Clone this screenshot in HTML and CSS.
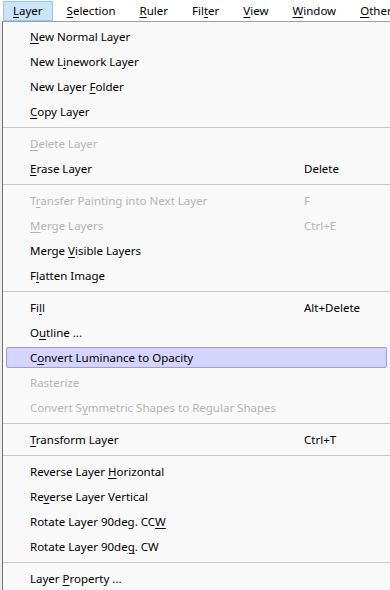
FILE: index.html
```html
<!DOCTYPE html>
<html lang="en">
<head>
<meta charset="UTF-8">
<title>Layer menu</title>
<link rel="stylesheet" href="styles.css">
</head>
<body>

<!-- MENU BAR -->
<div class="menubar">
    <span class="top active"><u>L</u>ayer</span>
    <span class="top"><u>S</u>election</span>
    <span class="top"><u>R</u>uler</span>
    <span class="top">Fil<u>t</u>er</span>
    <span class="top"><u>V</u>iew</span>
    <span class="top"><u>W</u>indow</span>
    <span class="top"><u>O</u>ther</span>
</div>

<div class="app">
    <!-- DROPDOWN -->
    <div class="menu">
        <div class="item"><span><u>N</u>ew Normal Layer</span></div>
        <div class="item"><span>New L<u>i</u>nework Layer</span></div>
        <div class="item"><span>New Layer <u>F</u>older</span></div>
        <div class="item"><span><u>C</u>opy Layer</span></div>
        <div class="sep"></div>
        <div class="item off"><span><u>D</u>elete Layer</span></div>
        <div class="item"><span><u>E</u>rase Layer</span><span class="key">Delete</span></div>
        <div class="sep"></div>
        <div class="item off"><span>T<u>r</u>ansfer Painting into Next Layer</span><span class="key">F</span></div>
        <div class="item off"><span><u>M</u>erge Layers</span><span class="key">Ctrl+E</span></div>
        <div class="item"><span>Merge <u>V</u>isible Layers</span></div>
        <div class="item"><span>F<u>l</u>atten Image</span></div>
        <div class="sep"></div>
        <div class="item"><span>Fi<u>l</u>l</span><span class="key">Alt+Delete</span></div>
        <div class="item"><span>O<u>u</u>tline ...</span></div>
        <div class="item hover"><span>C<u>o</u>nvert Luminance to Opacity</span></div>
        <div class="item off"><span>Rasterize</span></div>
        <div class="item off"><span>Convert S<u>y</u>mmetric Shapes to Regular Shapes</span></div>
        <div class="sep"></div>
        <div class="item"><span><u>T</u>ransform Layer</span><span class="key">Ctrl+T</span></div>
        <div class="sep"></div>
        <div class="item"><span>Reverse Layer <u>H</u>orizontal</span></div>
        <div class="item"><span>Re<u>v</u>erse Layer Vertical</span></div>
        <div class="item"><span>Rotate Layer 90deg. CC<u>W</u></span></div>
        <div class="item"><span>Rotate Layer 90de<u>g</u>. CW</span></div>
        <div class="sep"></div>
        <div class="item"><span>Layer <u>P</u>roperty ...</span></div>
    </div>
</div>

</body>
</html>
```

FILE: styles.css
```css
body {
    margin: 0;
    font-family: "Noto Sans", "Open Sans", sans-serif;
    font-size: 11.5px;
    color: #000;
    background: #fff;
    overflow: hidden;
}

.menubar {
    height: 21px;
    display: flex;
    align-items: center;
    background: #fff;
    white-space: nowrap;
    overflow: hidden;
}
.top {
    padding: 1px 9px 2px;
    margin: 0 2px;
    border: 1px solid transparent;
    line-height: 15px;
}
.top:first-child { margin-left: 3px; }
.top.active {
    background: #cce4f7;
    border-color: #99c9ef;
}

.app {
    padding-left: 2px;
    background: #ececec;
}
.menu {
    display: flex;
    flex-direction: column;
    border-top: 1px solid #a0a0a0;
    border-left: 1px solid #707070;
    background: #f9f9f9;
    padding: 2px 3px 0 3px;
    height: 590px;
}
.item {
    flex: none;
    height: 19px;
    margin: 2px 0;
    display: flex;
    align-items: center;
    padding-left: 23px;
    border: 1px solid transparent;
    border-radius: 2px;
    white-space: nowrap;
}
.item span:first-child { width: 274px; }
.item.off { color: #b4b4b4; }
.item.hover {
    background: #d4d4fc;
    border-color: #9a9af0;
}
.sep {
    flex: none;
    height: 7px;
    margin: 0 -3px;
    background: linear-gradient(#c8c8c8, #c8c8c8) 0 3px / 100% 1px no-repeat;
}
u { text-decoration-thickness: 1px; text-underline-offset: 2px; }
```
